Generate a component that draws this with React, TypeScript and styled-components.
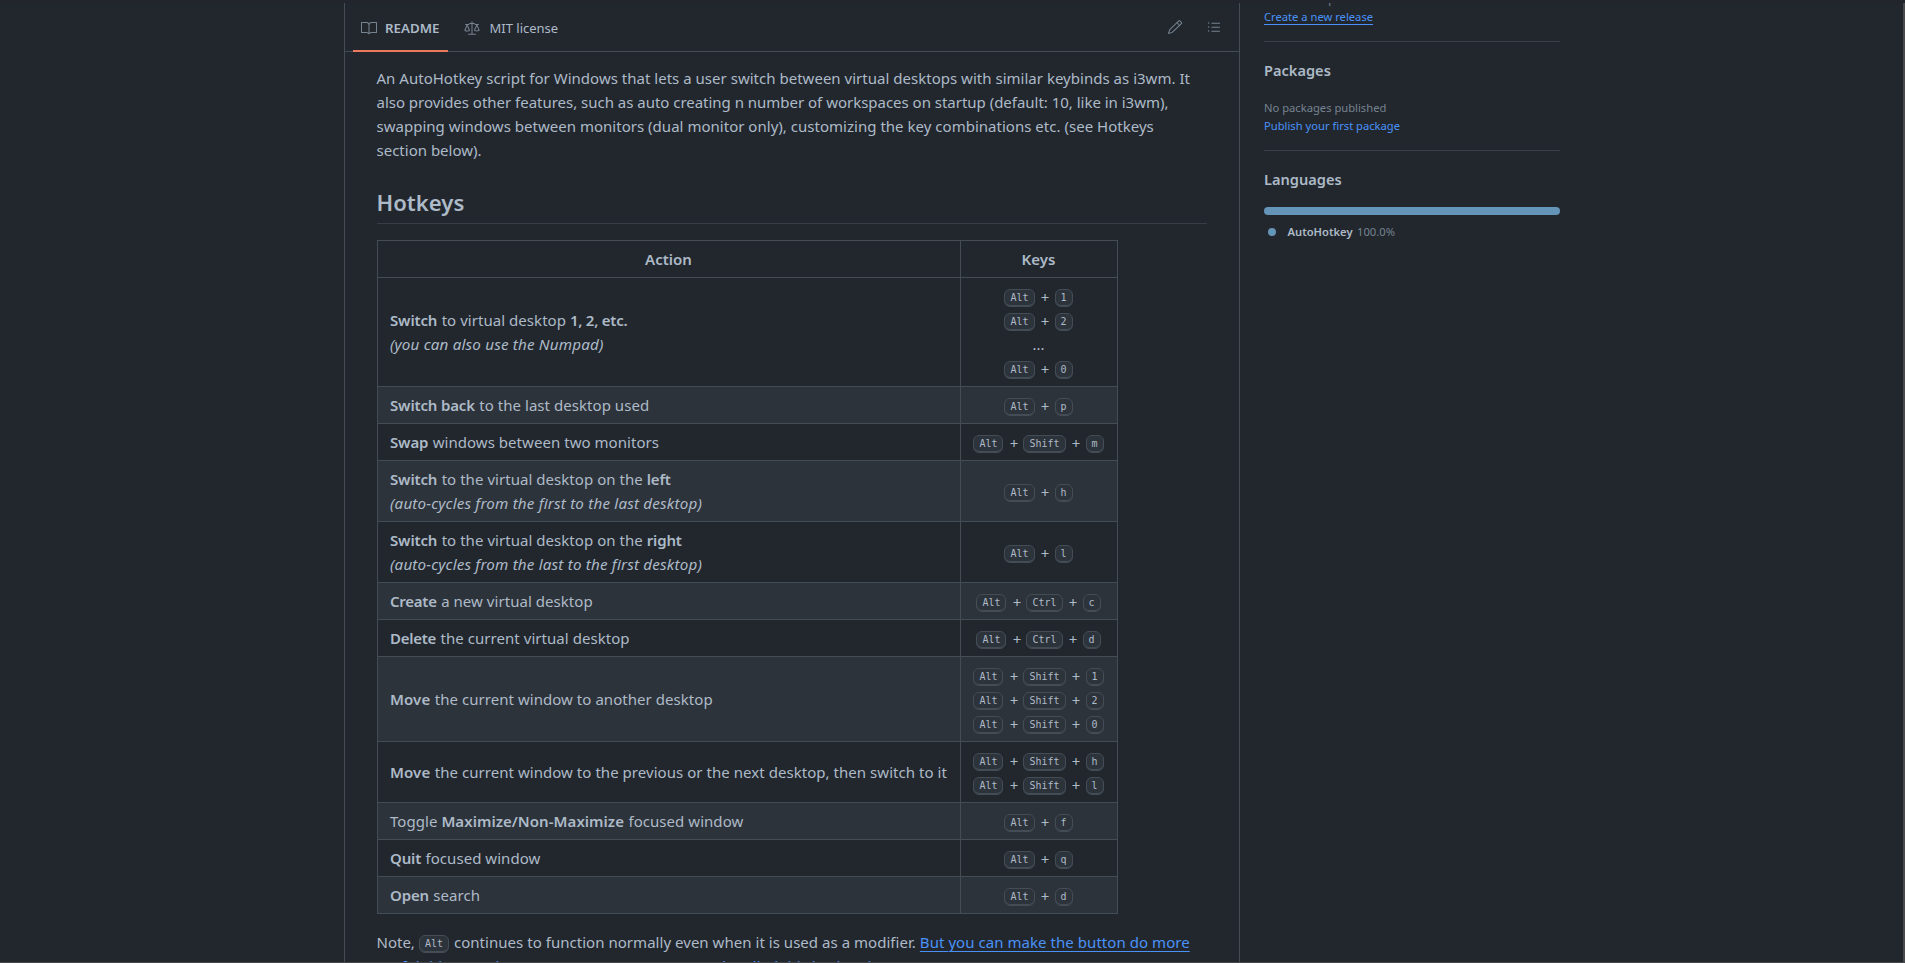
import React from "react";
import styled, { createGlobalStyle } from "styled-components";
import { GoBook, GoLaw, GoListUnordered, GoPencil } from "react-icons/go";

const color = {
  canvas: "#22272e",
  subtle: "#2d333b",
  fg: "#adbac7",
  muted: "#768390",
  border: "#444c56",
  borderMuted: "#373e47",
  link: "#4a92f7",
  language: "#6594b9",
};

const GlobalStyle = createGlobalStyle`
  *, *::before, *::after { box-sizing: border-box; }
  body {
    margin: 0;
    background: ${color.canvas};
    color: ${color.fg};
    font-family: "Noto Sans", "Open Sans", sans-serif;
    font-size: 15px;
    line-height: 24px;
  }
`;

const Window = styled.div`
  display: flex;
  flex-direction: column;
  height: 963px;
  overflow: hidden;
  border-top: 3px solid #23252d;
  border-bottom: 1px solid #46474b;
`;

const Viewport = styled.div`
  flex: 1;
  min-height: 0;
  display: flex;
  gap: 24px;
  padding-left: 344px;
  overflow: hidden;
  border-right: 2px solid #4a4a4c;
`;

const ReadmeBox = styled.main`
  flex: none;
  width: 896px;
  border-left: 1px solid ${color.border};
  border-right: 1px solid ${color.border};
`;

const ReadmeHeader = styled.header`
  display: flex;
  justify-content: space-between;
  height: 49px;
  padding: 0 17px 0 8px;
  border-bottom: 1px solid ${color.border};
`;

const TabList = styled.nav`
  display: flex;
  gap: 8px;
`;

const Tab = styled.a<{ $active?: boolean }>`
  display: flex;
  align-items: center;
  gap: ${(p) => (p.$active ? 8 : 9.5)}px;
  width: ${(p) => (p.$active ? "95px" : "auto")};
  height: 49px;
  padding: 3px 8px 0;
  border-bottom: 2px solid ${(p) => (p.$active ? "#ec775c" : "transparent")};
  font-size: ${(p) => (p.$active ? 13.3 : 13)}px;
  font-weight: ${(p) => (p.$active ? 600 : 400)};
  white-space: nowrap;

  svg {
    flex: none;
    width: 16px;
    height: 16px;
    color: ${color.muted};
  }
`;

const Actions = styled.div`
  display: flex;
  align-items: center;
  gap: 23px;
  color: ${color.muted};

  svg {
    width: 16px;
    height: 16px;
  }
`;

const Article = styled.article`
  padding: 14px 32px 0 31.5px;
`;

const Line = styled.span<{ $track?: number }>`
  display: block;
  white-space: nowrap;
  letter-spacing: ${(p) => p.$track ?? 0}px;
`;

const Paragraph = styled.p`
  margin: 0;
`;

const Heading = styled.h2`
  margin: 24px 0 16px;
  padding: 1px 0 6px;
  border-bottom: 1px solid ${color.borderMuted};
  font-size: 22.1px;
  font-weight: 600;
  line-height: 30px;
`;

const Table = styled.table`
  width: 741px;
  margin-bottom: 16px;
  border-collapse: collapse;
  table-layout: fixed;
`;

const Row = styled.tr`
  tbody &:nth-child(even) {
    background: ${color.subtle};
  }
`;

const HeadCell = styled.th<{ $width: number }>`
  width: ${(p) => p.$width}px;
  height: 37px;
  padding: 6px 13px;
  border: 1px solid ${color.border};
  font-weight: 600;
`;

const Cell = styled.td`
  padding: 6px 12.5px;
  border: 1px solid ${color.border};
  white-space: nowrap;
  letter-spacing: 0.045px;
`;

const Strong = styled.strong<{ $track?: number }>`
  font-weight: 600;
  letter-spacing: ${(p) => p.$track ?? -0.16}px;
  margin-right: 0.5px;
`;

const Em = styled.em`
  display: block;
  font-size: 15.2px;
  letter-spacing: 0.18px;
`;

const KeyLine = styled.div`
  display: flex;
  justify-content: center;
  align-items: center;
  height: 24px;
`;

const Plus = styled.span`
  width: 20px;
  padding: 1px 0 0 1px;
  text-align: center;
`;

const Kbd = styled.kbd`
  position: relative;
  top: 2px;
  display: inline-flex;
  align-items: center;
  justify-content: center;
  height: 18px;
  padding: 0 5px 1px;
  border: 1px solid ${color.border};
  border-radius: 6px;
  box-shadow: inset 0 -1px 0 ${color.border};
  background: ${color.subtle};
  font-family: "DejaVu Sans Mono", monospace;
  font-size: 10px;
  line-height: 10px;
  letter-spacing: 0;
`;

const NoteLine = styled.span`
  display: flex;
  align-items: center;
  height: 24px;
  white-space: nowrap;
`;

const NoteKey = styled.span`
  display: flex;
  margin: 0 5px 0 4px;
`;

const Link = styled.a<{ $underline?: boolean; $track?: number }>`
  color: ${color.link};
  text-decoration: ${(p) => (p.$underline ? "underline" : "none")};
  text-decoration-thickness: 1px;
  text-underline-offset: 3px;
  letter-spacing: ${(p) => p.$track ?? 0}px;
`;

const NoteLink = styled(Link)`
  margin-left: 4px;
`;

const Sidebar = styled.aside`
  width: 296px;
  overflow: hidden;
`;

const Section = styled.section<{ $first?: boolean }>`
  margin-top: ${(p) => (p.$first ? -13 : 0)}px;
  padding: ${(p) => (p.$first ? 0 : 16)}px 0 15px;

  & + & {
    border-top: 1px solid ${color.borderMuted};
  }
`;

const SideTitle = styled.h2`
  margin: 0 0 16px;
  font-size: 14.6px;
  font-weight: 600;
  line-height: 24px;
`;

const SideText = styled.div<{ $offset?: number }>`
  padding-top: ${(p) => p.$offset ?? 0}px;
  font-size: 11.2px;
  line-height: 18px;
  color: ${color.muted};
`;

const LanguageBar = styled.div`
  height: 8px;
  border-radius: 4px;
  background: ${color.language};
`;

const LanguageRow = styled.div`
  display: flex;
  align-items: center;
  margin: 8px 0 0 4px;
  font-size: 11.2px;
  line-height: 18px;
  color: ${color.muted};
`;

const Dot = styled.span`
  width: 8px;
  height: 8px;
  margin-right: 11.5px;
  border-radius: 50%;
  background: ${color.language};
`;

const LanguageName = styled.span`
  margin-right: 4.5px;
  font-weight: 600;
  color: ${color.fg};
`;

type Keys = string[] | "...";

const rows: { action: React.ReactNode; keys: Keys[] }[] = [
  {
    action: (
      <>
        <Strong>Switch</Strong> to virtual desktop <Strong $track={-0.25}>1, 2, etc.</Strong>
        <Em>(you can also use the Numpad)</Em>
      </>
    ),
    keys: [["Alt", "1"], ["Alt", "2"], "...", ["Alt", "0"]],
  },
  { action: <><Strong>Switch back</Strong> to the last desktop used</>, keys: [["Alt", "p"]] },
  { action: <><Strong>Swap</Strong> windows between two monitors</>, keys: [["Alt", "Shift", "m"]] },
  {
    action: (
      <>
        <Strong>Switch</Strong> to the virtual desktop on the <Strong>left</Strong>
        <Em>(auto-cycles from the first to the last desktop)</Em>
      </>
    ),
    keys: [["Alt", "h"]],
  },
  {
    action: (
      <>
        <Strong>Switch</Strong> to the virtual desktop on the <Strong>right</Strong>
        <Em>(auto-cycles from the last to the first desktop)</Em>
      </>
    ),
    keys: [["Alt", "l"]],
  },
  { action: <><Strong $track={-0.25}>Create</Strong> a new virtual desktop</>, keys: [["Alt", "Ctrl", "c"]] },
  { action: <><Strong $track={-0.25}>Delete</Strong> the current virtual desktop</>, keys: [["Alt", "Ctrl", "d"]] },
  {
    action: <><Strong $track={0.1}>Move</Strong> the current window to another desktop</>,
    keys: [["Alt", "Shift", "1"], ["Alt", "Shift", "2"], ["Alt", "Shift", "0"]],
  },
  {
    action: (
      <>
        <Strong $track={0.1}>Move</Strong> the current window to the previous or the next desktop, then switch to it
      </>
    ),
    keys: [["Alt", "Shift", "h"], ["Alt", "Shift", "l"]],
  },
  {
    action: <>Toggle <Strong $track={0.05}>Maximize/Non-Maximize</Strong> focused window</>,
    keys: [["Alt", "f"]],
  },
  { action: <><Strong>Quit</Strong> focused window</>, keys: [["Alt", "q"]] },
  { action: <><Strong>Open</Strong> search</>, keys: [["Alt", "d"]] },
];

function KeyCombo({ keys }: { keys: Keys }) {
  if (keys === "...") return <KeyLine>...</KeyLine>;
  return (
    <KeyLine>
      {keys.map((key, i) => (
        <React.Fragment key={i}>
          {i > 0 && <Plus>+</Plus>}
          <Kbd>{key}</Kbd>
        </React.Fragment>
      ))}
    </KeyLine>
  );
}

function HotkeyTable() {
  return (
    <Table>
      <thead>
        <Row>
          <HeadCell $width={583}>Action</HeadCell>
          <HeadCell $width={157}>Keys</HeadCell>
        </Row>
      </thead>
      <tbody>
        {rows.map((row, i) => (
          <Row key={i}>
            <Cell>{row.action}</Cell>
            <Cell>
              {row.keys.map((keys, j) => (
                <KeyCombo key={j} keys={keys} />
              ))}
            </Cell>
          </Row>
        ))}
      </tbody>
    </Table>
  );
}

export default function App() {
  return (
    <>
      <GlobalStyle />
      <Window>
        <Viewport>
          <ReadmeBox>
            <ReadmeHeader>
              <TabList>
                <Tab $active>
                  <GoBook />
                  README
                </Tab>
                <Tab>
                  <GoLaw />
                  MIT license
                </Tab>
              </TabList>
              <Actions>
                <GoPencil />
                <GoListUnordered />
              </Actions>
            </ReadmeHeader>
            <Article>
              <Paragraph>
                <Line $track={0.018}>
                  An AutoHotkey script for Windows that lets a user switch between virtual desktops with similar keybinds as i3wm. It
                </Line>
                <Line $track={-0.018}>
                  also provides other features, such as auto creating n number of workspaces on startup (default: 10, like in i3wm),
                </Line>
                <Line $track={0.02}>
                  swapping windows between monitors (dual monitor only), customizing the key combinations etc. (see Hotkeys
                </Line>
                <Line>section below).</Line>
              </Paragraph>
              <Heading>Hotkeys</Heading>
              <HotkeyTable />
              <Paragraph>
                <NoteLine>
                  Note,
                  <NoteKey>
                    <Kbd>Alt</Kbd>
                  </NoteKey>
                  <Line $track={0.035}>continues to function normally even when it is used as a modifier.</Line>
                  <NoteLink $underline $track={0.05}>But you can make the button do more</NoteLink>
                </NoteLine>
                <Line>
                  <Link $underline>useful things such as a screen menu or commands called this backend</Link>
                </Line>
              </Paragraph>
            </Article>
          </ReadmeBox>
          <Sidebar>
            <Section $first>
              <SideText>No releases published</SideText>
              <SideText>
                <Link $underline>Create a new release</Link>
              </SideText>
            </Section>
            <Section>
              <SideTitle>Packages</SideTitle>
              <SideText $offset={1}>No packages published</SideText>
              <SideText>
                <Link>Publish your first package</Link>
              </SideText>
            </Section>
            <Section>
              <SideTitle>Languages</SideTitle>
              <LanguageBar />
              <LanguageRow>
                <Dot />
                <LanguageName>AutoHotkey</LanguageName>
                100.0%
              </LanguageRow>
            </Section>
          </Sidebar>
        </Viewport>
      </Window>
    </>
  );
}
